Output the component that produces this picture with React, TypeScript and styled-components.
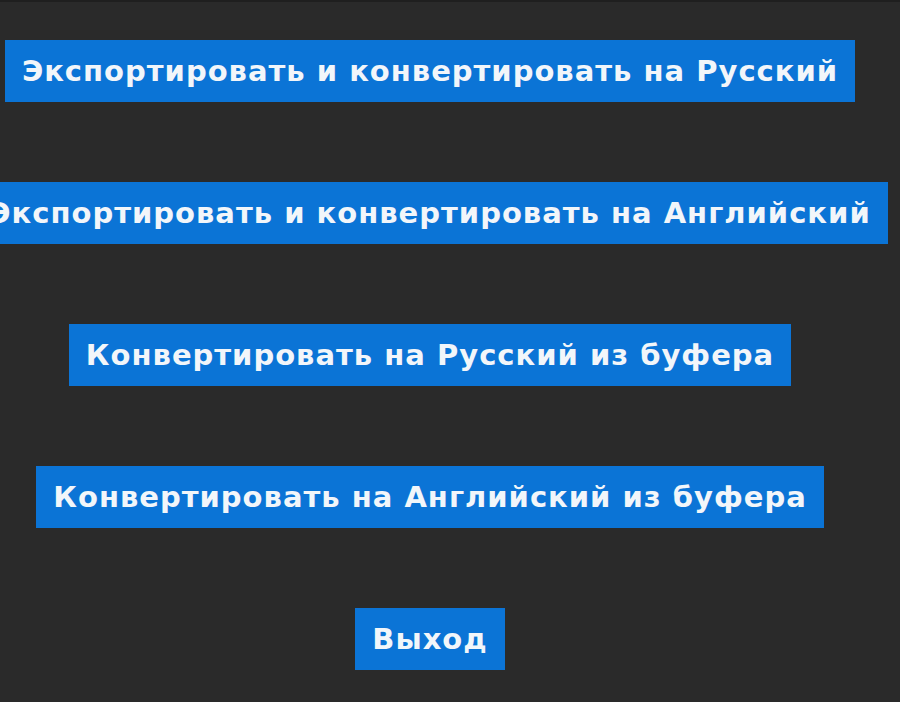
import styled, { createGlobalStyle } from 'styled-components';

const GlobalStyle = createGlobalStyle`
  html, body {
    margin: 0;
    padding: 0;
    background: #2a2a2a;
    overflow: hidden;
  }
  body {
    border-top: 2px solid #1f1f1f;
  }
`;

const Menu = styled.div`
  width: 860px;
  display: flex;
  flex-direction: column;
  align-items: center;
  gap: 80px;
  padding-top: 38px;
`;

const MenuButton = styled.button`
  height: 62px;
  padding: 0 17px;
  border: none;
  border-radius: 0;
  background: #0b74d6;
  color: #f2f6fa;
  font-family: "DejaVu Sans", Verdana, sans-serif;
  font-weight: bold;
  font-size: 29px;
  letter-spacing: 1px;
  white-space: nowrap;
  flex-shrink: 0;
  cursor: pointer;
`;

const items = [
  'Экспортировать и конвертировать на Русский',
  'Экспортировать и конвертировать на Английский',
  'Конвертировать на Русский из буфера',
  'Конвертировать на Английский из буфера',
  'Выход',
];

const App = () => (
  <>
    <GlobalStyle />
    <Menu>
      {items.map((label) => (
        <MenuButton key={label}>{label}</MenuButton>
      ))}
    </Menu>
  </>
);

export default App;
